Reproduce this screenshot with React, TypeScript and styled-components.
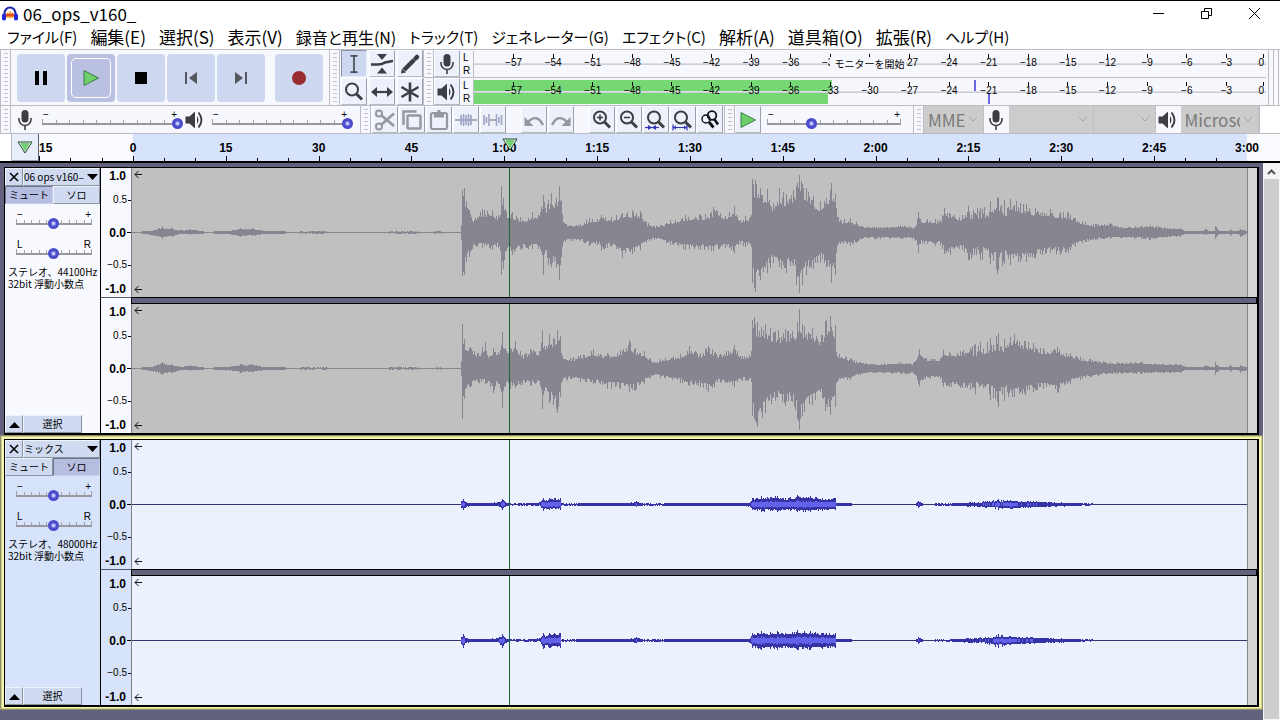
import React from "react";
import styled, { createGlobalStyle, css } from "styled-components";

const GlobalStyle = createGlobalStyle`
  * { box-sizing: border-box; }
  body { margin: 0; background: #62627f; }
  button, input, select { font: inherit; color: inherit; margin: 0; padding: 0; }
  svg { display: block; flex: none; }
`;

const ui = '"Noto Sans CJK JP", "Noto Sans", sans-serif';
const small = '"Liberation Sans", "Noto Sans CJK JP", sans-serif';
const line = "#bcbcc4";
const blue = "#cdd8f0";
const pale = "#f7f8fe";

const Page = styled.div`
  min-height: 100vh;
  display: flex;
  flex-direction: column;
  background: #fff;
  border-top: 1px solid #000;
  font-family: ${small};
  color: #000;
`;

/* ---------- title and menu ---------- */

const TitleBar = styled.header`
  display: flex;
  align-items: center;
  height: 25px;
  padding: 0 2px;
  gap: 5px;
  font: 17px/24px ${ui};
`;
const Title = styled.h1`
  flex: 1;
  margin: 0;
  font: inherit;
`;
const WindowButtons = styled.div`
  display: flex;
`;
const WindowButton = styled.button`
  width: 48px;
  height: 24px;
  border: 0;
  background: none;
  display: grid;
  place-items: center;
`;
const MenuBar = styled.nav`
  display: flex;
  align-items: center;
  gap: 13px;
  height: 23px;
  padding: 0 0 2px 7px;
`;
const MenuItem = styled.button<{ $size: number }>`
  border: 0;
  background: none;
  white-space: nowrap;
  font: ${(p) => p.$size}px/20px ${ui};
  font-feature-settings: "palt";
`;

/* ---------- toolbars ---------- */

const Dock = styled.div`
  display: flex;
  background: ${pale};
  border-top: 1px solid ${line};
`;
const Bar = styled.div<{ $grow?: boolean; $gap?: number; $end?: number }>`
  display: flex;
  align-items: center;
  gap: ${(p) => p.$gap ?? 0}px;
  padding-right: ${(p) => p.$end ?? 0}px;
  flex: ${(p) => (p.$grow ? "1 1 0" : "none")};
  min-width: 0;
`;
const Grip = styled.span`
  flex: none;
  align-self: stretch;
  width: 11px;
  border-right: 1px solid ${line};
  border-left: 1px solid ${line};
  background: repeating-linear-gradient(#c2c2cc 0 1px, transparent 1px 4px) 3px 3px / 4px calc(100% - 6px) no-repeat;
`;
const Transport = styled.div`
  display: flex;
  gap: 2px;
  height: 54px;
  padding: 3px 6px;
`;
const TransportButton = styled.button<{ $active?: boolean; $apart?: boolean }>`
  position: relative;
  width: 48px;
  height: 48px;
  margin-left: ${(p) => (p.$apart ? 8 : 0)}px;
  border: 0;
  border-radius: 4px;
  display: grid;
  place-items: center;
  background: ${(p) => (p.$active ? "#b9c0e1" : blue)};
  ${(p) =>
    p.$active &&
    css`
      &::after {
        content: "";
        position: absolute;
        inset: 4px;
        border: 1px solid #fff;
        border-radius: 5px;
      }
    `}
`;
const ToolGrid = styled.div`
  display: grid;
  grid-template-columns: repeat(3, 26px);
  gap: 1px 2px;
`;
const ToolButton = styled.button<{ $down?: boolean; $apart?: boolean }>`
  flex: none;
  width: 26px;
  height: 27px;
  margin-left: ${(p) => (p.$apart ? 14 : 0)}px;
  border: 1px solid;
  border-color: ${(p) => (p.$down ? "#8b93a9 #e8ecf8 #e8ecf8 #8b93a9" : "#fff #9aa0ac #b4b8c2 #fff")};
  background: ${(p) => (p.$down ? blue : "#ecf1fb")};
  display: grid;
  place-items: center;
`;
const Strip = styled.div`
  display: flex;
  gap: 1px;
`;

/* ---------- level meters ---------- */

const Meters = styled.div`
  flex: 1;
  min-width: 0;
  display: flex;
  flex-direction: column;
`;
const MeterRow = styled.div`
  display: flex;
  height: 28px;
  align-items: center;
  border-bottom: 1px solid ${line};
  &:last-child { border-bottom: 0; height: 27px; }
`;
const MeterSides = styled.div`
  width: 13px;
  padding-left: 3px;
  font-size: 10px;
  line-height: 13px;
`;
const Meter = styled.div`
  position: relative;
  flex: 1;
  height: 26px;
  padding: 1px 0;
  display: flex;
  flex-direction: column;
  gap: 2px;
  border-left: 1px solid ${line};
`;
const MeterMid = styled.i`
  position: absolute;
  left: 0;
  right: 0;
  top: 12px;
  height: 2px;
  background: linear-gradient(#e4e4ec, #c6c6ce);
`;
const Level = styled.div<{ $level: number; $peak: number }>`
  flex: 1;
  background: ${(p) => (p.$level ? `
    linear-gradient(#76d874, #76d874) 0 0 / ${p.$level}% 100% no-repeat,
    linear-gradient(#6a68e2, #6a68e2) ${p.$peak}% 0 / 2px 100% no-repeat` : "transparent")};
`;
const Scale = styled.div`
  position: absolute;
  inset: 0;
  display: grid;
  grid-template-columns: repeat(20, 1fr);
`;
const ScaleCell = styled.span`
  justify-self: end;
  width: 0;
  display: flex;
  flex-direction: column;
  align-items: center;
  padding-top: 3px;
  font-size: 10px;
  line-height: 12px;
  white-space: nowrap;
  &::before {
    content: "";
    flex: none;
    width: 1px;
    height: 4px;
    margin-bottom: -1px;
    background: #000;
  }
  &:last-child {
    align-items: flex-end;
    padding-right: 2px;
  }
`;
const MeterHint = styled.span`
  position: absolute;
  left: 45%;
  top: 6px;
  width: 76px;
  padding-left: 4px;
  background: ${pale};
  font: 10px/14px ${ui};
  white-space: nowrap;
`;
const MeterEnd = styled.div`
  width: 12px;
  border-left: 1px solid ${line};
  margin-left: 2px;
  display: flex;
  &::after {
    content: "";
    width: 4px;
    margin-left: 4px;
    border-left: 1px solid ${line};
    border-right: 1px solid ${line};
  }
`;

/* ---------- slider ---------- */

const SliderBox = styled.label<{ $width: number }>`
  display: block;
  flex: none;
  width: ${(p) => p.$width}px;
`;
const SliderEnds = styled.span`
  display: flex;
  justify-content: space-between;
  padding: 0 1px;
  font: 10px/9px ${small};
`;
const Ticks = styled.span`
  display: flex;
  height: 4px;
  border-right: 1px solid #a4a4ac;
`;
const Tick = styled.i`
  flex: 1;
  border-left: 1px solid #a4a4ac;
  margin-top: 1px;
  &:first-child { margin-top: 0; }
`;
const Range = styled.input`
  appearance: none;
  display: block;
  width: calc(100% + 10px);
  height: 11px;
  margin: -5px -5px 0;
  background: linear-gradient(#98989e, #98989e) center / calc(100% - 10px) 2px no-repeat;
  &::-webkit-slider-thumb {
    appearance: none;
    width: 11px;
    height: 11px;
    border-radius: 50%;
    background: radial-gradient(circle, #c8ccf6 0 1px, #8488e4 2px, #4a4ccc 3px);
  }
`;

/* ---------- device toolbar ---------- */

const SelectBox = styled.div<{ $grow: number }>`
  position: relative;
  flex: ${(p) => p.$grow} 1 0;
  min-width: 0;
  border-right: 1px solid #c0c0c0;
  svg {
    position: absolute;
    right: 5px;
    top: 10px;
    pointer-events: none;
  }
`;
const Select = styled.select`
  appearance: none;
  display: block;
  width: 100%;
  height: 27px;
  padding: 0 18px 0 4px;
  border: 0;
  border-radius: 0;
  background: #cccccc;
  color: #7a7a7a;
  opacity: 1;
  font: 17px/27px ${ui};
`;
const IconSlot = styled.span`
  flex: none;
  width: 25px;
  display: grid;
  place-items: center;
`;
const DockTail = styled.div`
  width: 21px;
  border-left: 1px solid ${line};
  background: #fff;
`;

/* ---------- time ruler ---------- */

const TimeRuler = styled.div`
  display: flex;
  height: 30px;
  background: #fafbff;
  border-top: 1px solid ${line};
  border-bottom: 2px solid #000;
  overflow: hidden;
`;
const RulerLead = styled.div`
  flex: none;
  width: 12px;
  border-right: 1px solid ${line};
  background: #fff;
`;
const PinButton = styled.button`
  flex: none;
  width: 27px;
  border: 0;
  border-right: 1px solid #5a6178;
  border-bottom: 1px solid #9a9fae;
  background: #e9effa;
  display: grid;
  place-items: center;
`;
const RulerSpan = styled.div<{ $width?: number; $shade?: boolean }>`
  position: relative;
  display: flex;
  flex: ${(p) => (p.$width ? `none` : "1")};
  width: ${(p) => (p.$width ? `${p.$width}px` : "auto")};
  background: ${(p) => (p.$shade ? "#d6e3fb" : "transparent")};
`;
const RulerCell = styled.div`
  flex: 1;
  display: flex;
  flex-direction: column;
  justify-content: space-between;
`;
const RulerLabel = styled.span<{ $flush?: boolean }>`
  width: 0;
  display: flex;
  justify-content: ${(p) => (p.$flush ? "flex-start" : "center")};
  padding-top: 6px;
  font: bold 12px/16px ${small};
  white-space: nowrap;
`;
const RulerTicks = styled.span`
  display: flex;
  align-items: flex-end;
`;
const RulerTick = styled.i`
  flex: 1;
  height: 3px;
  border-left: 1px solid #000;
  &:first-child { height: 5px; }
`;
const PlayHead = styled.span`
  position: absolute;
  left: 33.8%;
  top: 4px;
  width: 0;
  display: flex;
  justify-content: center;
`;

/* ---------- tracks ---------- */

const Workspace = styled.main`
  flex: 1;
  display: flex;
  background: #62627f;
`;
const TrackList = styled.div`
  flex: 1;
  min-width: 0;
`;
const TrackFrame = styled.section<{ $selected: boolean }>`
  padding: ${(p) => (p.$selected ? "4px 4px 3px" : "4px 4px 0")};
  ${(p) =>
    p.$selected &&
    css`
      background: #f6f6b4;
      box-shadow: inset 0 0 0 1px #8e8e72, inset 0 0 0 2px #cfcf7c;
    `}
`;
const TrackBox = styled.div`
  display: flex;
  border: solid #000;
  border-width: 1px 2px 2px 1px;
`;
const Panel = styled.div<{ $selected: boolean }>`
  flex: none;
  width: 96px;
  display: flex;
  flex-direction: column;
  border-right: 1px solid #000;
  background: ${(p) => (p.$selected ? "#d6e3fb" : "#f8f9ff")};
  font: 10px/12px ${ui};
`;
const PanelRow = styled.div`
  display: flex;
  height: 18px;
`;
const PanelButton = styled.button<{ $width?: number; $down?: boolean; $title?: boolean }>`
  flex: ${(p) => (p.$width ? "none" : "1")};
  width: ${(p) => (p.$width ? `${p.$width}px` : "auto")};
  min-width: 0;
  display: flex;
  align-items: center;
  justify-content: ${(p) => (p.$title ? "space-between" : "center")};
  overflow: hidden;
  white-space: nowrap;
  border: 1px solid;
  border-color: ${(p) => (p.$down ? "#70768c #c8cee4 #c8cee4 #70768c" : "#eef2fc #8e93a2 #8e93a2 #eef2fc")};
  background: ${(p) => (p.$down ? "#b6bde0" : "#d0dbf2")};
`;
const PanelSliders = styled.div`
  display: flex;
  flex-direction: column;
  gap: 11px;
  padding: 6px 0 0 11px;
`;
const PanelInfo = styled.p`
  margin: 7px 0 auto;
  padding-left: 3px;
  white-space: nowrap;
`;
const Channels = styled.div`
  flex: 1;
  min-width: 0;
  display: flex;
  flex-direction: column;
`;
const Channel = styled.div`
  display: flex;
  height: 129px;
`;
const ChannelGap = styled.div<{ $selected: boolean }>`
  height: 7px;
  padding-left: 30px;
  background: ${(p) => `linear-gradient(#55586a, #55586a) 0 0 / 100% 1px no-repeat ${p.$selected ? "#d6e3fb" : "#f8f9ff"}`};
`;
const GapBar = styled.div`
  height: 7px;
  background: #62627f;
  border: 1px solid #000;
`;
const AmpRuler = styled.div<{ $selected: boolean }>`
  flex: none;
  width: 31px;
  display: grid;
  grid-template-rows: 16px 32px 33px 32px 16px;
  border-right: 1px solid #808088;
  background: ${(p) => (p.$selected ? "#d6e3fb" : "#f8f9ff")};
`;
const Amp = styled.span<{ $strong?: boolean; $tick?: number }>`
  display: flex;
  align-items: center;
  justify-content: flex-end;
  gap: 1px;
  font-weight: ${(p) => (p.$strong ? "bold" : "normal")};
  font-size: ${(p) => (p.$strong ? 12 : 10)}px;
  line-height: 16px;
  &::after {
    content: "";
    width: ${(p) => (p.$tick ? p.$tick : 4)}px;
    height: 1px;
    background: ${(p) => (p.$tick ? "#000" : "transparent")};
  }
`;
const Clip = styled.div<{ $selected: boolean }>`
  position: relative;
  flex: 1;
  min-width: 0;
  background: ${(p) => (p.$selected ? "#ebf1fd" : "#c0c0c0")};
  border-right: 1px solid #858585;
`;
const AfterClip = styled.div`
  width: 9px;
  background: #d6d6d8;
`;
const ArrowSvg = styled.svg<{ $bottom?: boolean }>`
  position: absolute;
  left: 2px;
  ${(p) => (p.$bottom ? "bottom: 3px;" : "top: 2px;")}
`;
const ScrollBar = styled.div`
  flex: none;
  width: 17px;
  padding: 1px;
  background: #f4f4f4;
  display: flex;
  flex-direction: column;
`;
const ScrollUp = styled.button`
  height: 15px;
  border: 0;
  background: none;
  display: grid;
  place-items: center;
`;
const ScrollThumb = styled.div`
  flex: 1;
  background: #cdcdcd;
`;

/* ---------- waveform data: [x, up, down] peaks in pixels ---------- */

type Peak = [number, number, number];
const quietIntro: Peak[] = [
  [0, 0, 0], [9, 0, 0], [10, 1, 1], [18, 1, 2], [26, 4, 4], [30, 6, 6], [34, 4, 4], [40, 4, 4], [45, 2, 2], [53, 2, 1],
  [58, 3, 2], [64, 2, 1], [71, 1, 1], [72, 0, 0], [81, 0, 0], [82, 1, 1], [100, 2, 2], [108, 4, 4], [113, 3, 3], [120, 4, 3],
  [128, 2, 2], [133, 1, 1], [153, 1, 1], [154, 0, 0], [167, 0, 0], [168, 0.8, 0.8], [194, 0.6, 0.6], [195, 0, 0],
  [256, 0, 0], [257, 0.6, 0.6], [285, 0.5, 0.5], [286, 0, 0], [301, 0, 0], [302, 0.8, 0.8], [309, 0.8, 0.8], [310, 0, 0], [328, 0, 0],
];
const outro: Peak[] = [
  [1048, 4, 4], [1053, 1, 1], [1068, 1, 1], [1074, 3, 2], [1078, 1, 1], [1082, 1, 1], [1083, 6, 6], [1086, 2, 2], [1088, 1, 1],
  [1096, 1, 1], [1098, 3, 3], [1101, 1, 1], [1106, 1, 1], [1108, 3, 4], [1112, 2, 2], [1115, 1, 1],
];
const left: Peak[] = [
  ...quietIntro,
  [329, 7, 7], [330, 42, 43], [332, 44, 42], [334, 31, 29], [337, 22, 24], [339, 15, 17], [345, 15, 14], [350, 23, 15], [360, 22, 17],
  [366, 17, 15], [368, 17, 18], [369, 46, 42], [371, 34, 36], [374, 20, 18], [380, 20, 22], [388, 15, 17], [396, 14, 16], [400, 20, 16],
  [408, 20, 16], [411, 37, 42], [413, 24, 18], [416, 32, 32], [419, 39, 34], [424, 34, 35], [427, 46, 47], [429, 32, 24], [430, 18, 14],
  [433, 8, 9], [448, 8, 8], [457, 14, 13], [468, 14, 12], [469, 17, 18], [479, 15, 14], [490, 19, 25], [500, 22, 21], [508, 21, 17],
  [514, 10, 10], [524, 6, 6], [538, 12, 12], [553, 17, 17], [568, 18, 17], [579, 20, 18], [581, 25, 18], [593, 16, 15], [602, 26, 20],
  [608, 12, 11], [613, 16, 14], [619, 17, 14], [620, 53, 50], [623, 52, 59], [628, 44, 47], [635, 43, 40], [641, 29, 30], [647, 44, 34],
  [654, 38, 40], [661, 42, 33], [664, 46, 52], [667, 57, 60], [670, 48, 52], [674, 44, 42], [681, 36, 36], [688, 31, 30], [694, 34, 34],
  [699, 49, 50], [703, 38, 42], [704, 24, 20], [708, 12, 11], [718, 14, 13], [724, 10, 10], [730, 6, 6], [748, 5, 6], [768, 7, 6],
  [782, 5, 6], [785, 13, 12], [786, 20, 20], [788, 13, 11], [803, 13, 13], [808, 12, 12], [812, 24, 21], [818, 18, 22], [830, 17, 17],
  [836, 26, 27], [848, 24, 27], [858, 31, 31], [865, 35, 41], [872, 32, 31], [878, 33, 32], [888, 29, 29], [894, 28, 29], [903, 24, 25],
  [918, 23, 20], [928, 20, 22], [936, 20, 20], [943, 14, 14], [953, 10, 9], [963, 8, 7], [978, 9, 6], [988, 5, 5], [1018, 7, 7], [1038, 4, 4],
  ...outro,
];
const right: Peak[] = [
  ...quietIntro,
  [329, 7, 7], [330, 44, 50], [332, 29, 30], [338, 21, 18], [346, 15, 14], [353, 26, 15], [355, 13, 14], [361, 20, 24], [366, 16, 15],
  [370, 36, 39], [373, 20, 17], [378, 20, 20], [383, 27, 19], [390, 13, 16], [398, 19, 17], [408, 17, 17], [410, 38, 40], [412, 22, 22],
  [417, 34, 34], [421, 30, 36], [425, 38, 44], [428, 32, 28], [429, 15, 14], [438, 10, 10], [448, 13, 13], [461, 19, 15], [468, 14, 15],
  [475, 15, 20], [488, 18, 20], [497, 28, 23], [503, 20, 22], [512, 17, 15], [518, 9, 9], [522, 6, 6], [528, 9, 9], [548, 14, 14],
  [557, 22, 17], [568, 15, 18], [576, 22, 23], [588, 14, 14], [602, 23, 18], [610, 12, 12], [619, 17, 13], [620, 48, 47], [622, 51, 50],
  [625, 46, 58], [633, 44, 44], [643, 37, 32], [653, 39, 37], [660, 37, 33], [665, 46, 50], [667, 59, 61], [670, 44, 47], [680, 40, 36],
  [690, 33, 29], [693, 47, 42], [698, 52, 46], [703, 43, 38], [704, 16, 14], [718, 10, 11], [728, 6, 6], [743, 4, 4], [768, 6, 5],
  [781, 5, 5], [787, 19, 17], [793, 10, 10], [808, 10, 10], [811, 18, 18], [828, 17, 19], [843, 24, 25], [858, 30, 31], [866, 35, 38],
  [872, 29, 32], [882, 34, 28], [893, 27, 26], [901, 25, 23], [911, 20, 20], [925, 21, 24], [938, 15, 15], [948, 11, 11], [958, 9, 8],
  [978, 6, 5], [1008, 6, 5], [1038, 4, 4],
  ...outro,
];
const mix: Peak[] = [
  [0, 0, 0], [328, 0, 0], [329, 3, 3], [331, 5, 5], [334, 2, 2], [340, 1, 1], [366, 2, 1], [370, 5, 5], [373, 2, 2], [376, 1, 1],
  [393, 0.8, 0.8], [408, 2, 1], [411, 6, 6], [414, 4, 4], [417, 6, 5], [428, 6, 5], [429, 0.9, 0.9], [445, 0.9, 0.9], [446, 1, 1],
  [496, 1, 1], [504, 3, 2], [509, 1, 1], [522, 0.6, 0.6], [532, 1, 1], [610, 1, 1],
  [618, 2, 2], [620, 6, 5], [629, 8, 7], [638, 7, 6], [645, 8, 7], [653, 6, 5], [665, 9, 7], [678, 8, 7], [690, 6, 6], [703, 6, 5],
  [704, 1, 1], [719, 1, 1], [720, 0, 0], [783, 0, 0], [786, 3, 3], [790, 1, 1], [791, 0, 0], [802, 0, 0], [803, 0.9, 0.9], [820, 1, 1],
  [838, 2, 2], [853, 3, 3], [866, 5, 5], [878, 4, 4], [898, 3, 3], [918, 2, 2], [948, 1, 1], [960, 0.7, 0.7], [961, 0, 0], [1115, 0, 0],
];
const mixRight = mix.map(([x, u, d]): Peak => [x, u > 4 ? u + 1 : u, d > 4 ? d + 2 : d]);

const random = (seed: number) => {
  let s = seed;
  return () => {
    s = (s * 1664525 + 1013904223) >>> 0;
    return s / 4294967296;
  };
};

function wavePaths(peaks: Peak[], seed: number) {
  const next = random(seed);
  let outer = "";
  let inner = "";
  let k = 0;
  for (let x = 0; x < 1115; x++) {
    while (k < peaks.length - 2 && peaks[k + 1][0] <= x) k++;
    const [x0, u0, d0] = peaks[k];
    const [x1, u1, d1] = peaks[k + 1];
    const t = (x - x0) / (x1 - x0);
    const exact = x === x0;
    const comb = x > 836 && x < 875 ? 0.5 : 0.66;
    const shape = (v: number) => {
      const r = next();
      if (v < 1) return v > 0.4 ? Math.round(r) : 0;
      return Math.round(exact ? v : v * (comb + (1 - comb) * r * r));
    };
    const up = shape(u0 + (u1 - u0) * t);
    const down = shape(d0 + (d1 - d0) * t);
    if (up || down) outer += `M${x + 0.5} ${64 - up}V${65 + down}`;
    if (up > 2) inner += `M${x + 0.5} ${64 - Math.round(up * 0.4)}V${65 + Math.round(down * 0.4)}`;
  }
  return { outer, inner };
}

/* ---------- icons ---------- */

const ink = "#3d3d44";
const Icon = ({ s = 22, children }: { s?: number; children: React.ReactNode }) => (
  <svg width={s} height={s} viewBox="0 0 22 22" fill="none" stroke={ink} strokeWidth="2">
    {children}
  </svg>
);
const MicIcon = () => (
  <Icon>
    <rect x="7.500" y="1" width="7" height="12.500" rx="3.500" fill={ink} stroke="none" />
    <path d="M5 9v1.500a6 6 0 0 0 12 0V9M11 16.500V21" strokeWidth="1.600" />
  </Icon>
);
const SpeakerIcon = () => (
  <Icon>
    <path d="M1.500 7.500h4L11 2.500v17l-5.500-5h-4z" fill={ink} stroke="none" />
    <path d="M13 7q3 4 0 8z" fill={ink} stroke="none" />
    <path d="M14.500 3.500q6 7.500 0 15" strokeWidth="1.900" />
  </Icon>
);
const Lens = ({ children }: { children?: React.ReactNode }) => (
  <Icon>
    <circle cx="9" cy="8.500" r="6" strokeWidth="2" />
    <path d="M13.500 13l5.500 5.500" strokeWidth="3" />
    {children}
  </Icon>
);
const PlayTriangle = ({ s = 18 }: { s?: number }) => (
  <svg width={s} height={s} viewBox="0 0 18 18">
    <path d="M2 1.500L16.500 9 2 16.500z" fill="#6ccf6a" stroke="#3b7c48" />
  </svg>
);
const PinTriangle = () => (
  <svg width="16" height="13" viewBox="0 0 16 13">
    <path d="M1 1h14L8 12z" fill="#e9f6e9" stroke="#1e4a28" />
    <path d="M4 2.500h8L8 9.500z" fill="#70d56e" stroke="#5cae62" strokeWidth=".6" />
  </svg>
);
const Chevron = () => (
  <svg width="10" height="7" viewBox="0 0 10 7">
    <path d="M1 1l4 4 4-4" fill="none" stroke="#a2a2a2" />
  </svg>
);
const Triangle = ({ up }: { up?: boolean }) => (
  <svg width="13" height="7" viewBox="0 0 13 7">
    <path d={up ? "M1 7h11L6.500 1z" : "M1 0h11L6.500 6z"} />
  </svg>
);
const Arrow = ({ bottom }: { bottom?: boolean }) => (
  <ArrowSvg $bottom={bottom} width="8" height="9" viewBox="0 0 8 9">
    <path d="M8 4.500H1M4.500 1L1 4.500 4.500 8" fill="none" stroke="#111" />
  </ArrowSvg>
);
const AppIcon = () => (
  <svg width="16" height="16" viewBox="0 0 16 16">
    <path d="M4 8l2-2 1 2 1-4 1 4 1-2 2 2v3l-2 1-1-1-1 2-1-2-1 1-2-1z" fill="#f08a1c" />
    <path d="M4 9h8" stroke="#e2381c" strokeWidth="1.500" />
    <path d="M2.500 9V7.500a5.500 6 0 0 1 11 0V9" fill="none" stroke="#1a22a8" strokeWidth="2" />
    <rect x="0" y="7.500" width="4" height="7" rx="1.800" fill="#2228d8" />
    <rect x="12" y="7.500" width="4" height="7" rx="1.800" fill="#2228d8" />
  </svg>
);

const grey = "#96969e";
const editTools: [string, React.ReactNode, boolean?][] = [
  ["切り取り", <Icon><g stroke={grey}><circle cx="5" cy="4.500" r="3" /><circle cx="5" cy="17.500" r="3" /><path d="M7.500 6.500L20 17M7.500 15.500L20 4.500" strokeWidth="2.600" /></g></Icon>],
  ["コピー", <Icon><g stroke={grey} strokeWidth="2.400"><path d="M2.500 16V2.500h13" /><rect x="6.500" y="6.500" width="13" height="13" rx="1" /></g></Icon>],
  ["貼り付け", <Icon><g stroke={grey} strokeWidth="2.200"><rect x="3" y="4" width="16" height="16" rx="2" /><path d="M7 4h8v3.500H7zM9.500 2h3" fill={grey} /></g></Icon>],
  ["トリム", <Icon><path d="M0 11h22" stroke={grey} strokeWidth="1.500" /><path d="M6 6v10M8.500 5v12M11 6v10M13.500 5v12M16 6v10" stroke="#9ea2c4" strokeWidth="1.600" /></Icon>],
  ["無音", <Icon><path d="M8 11h6" stroke={grey} strokeWidth="1.500" /><path d="M2 6v10M4.500 8v6M7 5v12M14.500 5v12M17 8v6M19.500 6v10" stroke="#9ea2c4" strokeWidth="1.600" /></Icon>],
  ["元に戻す", <Icon><path d="M5 13q9-9 15 3" stroke={grey} strokeWidth="2.400" /><path d="M1.500 8v9h9z" fill={grey} stroke="none" /></Icon>, true],
  ["やり直す", <Icon><path d="M2 16q6-12 15-3" stroke={grey} strokeWidth="2.400" /><path d="M20.500 8v9h-9z" fill={grey} stroke="none" /></Icon>],
  ["拡大", <Lens><path d="M6 8.500h6M9 5.500v6" strokeWidth="1.600" /></Lens>, true],
  ["縮小", <Lens><path d="M6 8.500h6" strokeWidth="1.600" /></Lens>],
  ["選択に合わせる", <Lens><path d="M0 18.500h14" stroke="#3434b4" strokeWidth="1.200" /><path d="M3 16v5L7 18.500zM11 16v5L7 18.500z" fill="#3434b4" stroke="none" /></Lens>],
  ["全体に合わせる", <Lens><path d="M1 18.500h14M1 15.500v6M15 15.500v6" stroke="#3434b4" strokeWidth="1.200" /><path d="M1 18.500l3-2v4zM15 18.500l-3-2v4z" fill="#3434b4" stroke="none" /></Lens>],
  ["ズーム切り替え", <Icon><g stroke="#111"><circle cx="13" cy="6.500" r="4.300" strokeWidth="1.800" /><circle cx="7" cy="10" r="4" strokeWidth="1.400" /><path d="M15.500 10.500l3.500 5" strokeWidth="2.600" /><path d="M10 13l4.500 5.500" strokeWidth="2.800" /></g></Icon>],
];

const pointerTools: [string, React.ReactNode][] = [
  ["選択ツール", <Icon><path d="M7.500 2.800H11h3.500M11 2.800v16.400M7.500 19.200h7" stroke="#4a4d58" strokeWidth="1.700" /></Icon>],
  ["エンベロープ", <Icon><path d="M0 11.500h7q4 0 7-2l8-1.500" strokeWidth="2.600" /><path d="M6 1h10l-5 6zM6 20.500h10l-5-6z" fill={ink} stroke="none" /></Icon>],
  ["描画ツール", <Icon><path d="M5 17L15 7" strokeWidth="4.500" /><path d="M16.500 5.500l1.500-1.500" strokeWidth="4.500" strokeLinecap="round" /><path d="M2 20.500l1-5 4 4z" fill={ink} stroke="none" /></Icon>],
  ["ズームツール", <Lens />],
  ["タイムシフト", <Icon><path d="M4 11h14" strokeWidth="2.200" /><path d="M0 11l6-5v10zM22 11l-6-5v10z" fill={ink} stroke="none" /></Icon>],
  ["マルチツール", <Icon><path d="M11 1.500v19M2.500 6l17 10M19.500 6l-17 10" strokeWidth="2.600" /></Icon>],
];

/* ---------- parts ---------- */

function Slider({ label, width, value, ends = ["−", "+"] }: { label: string; width: number; value: number; ends?: string[] }) {
  return (
    <SliderBox $width={width}>
      <SliderEnds><span>{ends[0]}</span><span>{ends[1]}</span></SliderEnds>
      <Ticks>{Array.from({ length: 10 }, (_, i) => <Tick key={i} />)}</Ticks>
      <Range type="range" aria-label={label} defaultValue={value} />
    </SliderBox>
  );
}

const dbMarks = Array.from({ length: 20 }, (_, i) => 57 - i * 3);

function LevelMeter({ label, icon, levels, peaks, hint }: { label: string; icon: React.ReactNode; levels: number[]; peaks: number[]; hint?: string }) {
  /* the hint sits over the -30 mark, so that mark keeps only its tick */
  const text = (m: number) => (hint && m === 30 ? "" : m ? `−${m}` : "0");
  return (
    <MeterRow>
      <Grip />
      <ToolButton aria-label={label}>{icon}</ToolButton>
      <MeterSides>L<br />R</MeterSides>
      <Meter>
        <Level $level={levels[0]} $peak={peaks[0]} />
        <Level $level={levels[1]} $peak={peaks[1]} />
        <MeterMid />
        <Scale>{dbMarks.map((m) => <ScaleCell key={m}>{text(m)}</ScaleCell>)}</Scale>
        {hint && <MeterHint>{hint}</MeterHint>}
      </Meter>
    </MeterRow>
  );
}

function Device({ label, value, grow }: { label: string; value: string; grow: number }) {
  return (
    <SelectBox $grow={grow}>
      <Select aria-label={label} disabled><option>{value}</option></Select>
      <Chevron />
    </SelectBox>
  );
}

function Wave({ peaks, seed, selected }: { peaks: Peak[]; seed: number; selected: boolean }) {
  const { outer, inner } = wavePaths(peaks, seed);
  return (
    <Channel>
      <AmpRuler $selected={selected}>
        <Amp $strong>1.0</Amp>
        <Amp $tick={3}>0.5</Amp>
        <Amp $strong $tick={4}>0.0</Amp>
        <Amp $tick={3}>−0.5</Amp>
        <Amp $strong>-1.0</Amp>
      </AmpRuler>
      <Clip $selected={selected}>
        <svg width="100%" height="129" viewBox="0 0 1115 129" preserveAspectRatio="none" shapeRendering="crispEdges">
          <path d="M0 64.500H1115" stroke={selected ? "#34346e" : "#868690"} />
          <path d={outer} stroke={selected ? "#3634a4" : "#868690"} />
          {selected && <path d={inner} stroke="#6462ea" />}
          <path d="M377 0h1v129h-1z" fill="#1f6636" />
        </svg>
        <Arrow />
        <Arrow bottom />
      </Clip>
      <AfterClip />
    </Channel>
  );
}

interface TrackProps {
  name: string;
  rate: string;
  selected: boolean;
  muted: boolean;
  solo: boolean;
  channels: [Peak[], number][];
}

function Track({ name, rate, selected, muted, solo, channels }: TrackProps) {
  return (
    <TrackFrame $selected={selected}>
      <TrackBox>
        <Panel $selected={selected}>
          <PanelRow>
            <PanelButton $width={18} aria-label="閉じる">
              <svg width="10" height="10" viewBox="0 0 10 10"><path d="M1 1l8 8M9 1L1 9" stroke="#000" strokeWidth="1.500" /></svg>
            </PanelButton>
            <PanelButton $title>{name}<Triangle /></PanelButton>
          </PanelRow>
          <PanelRow>
            <PanelButton $width={48} $down={muted}>ミュート</PanelButton>
            <PanelButton $down={solo}>ソロ</PanelButton>
          </PanelRow>
          <PanelSliders>
            <Slider label="ゲイン" width={76} value={49} />
            <Slider label="パン" width={76} value={49} ends={["L", "R"]} />
          </PanelSliders>
          <PanelInfo>ステレオ、{rate}<br />32bit 浮動小数点</PanelInfo>
          <PanelRow>
            <PanelButton $width={18} aria-label="折りたたむ"><Triangle up /></PanelButton>
            <PanelButton $width={59}>選択</PanelButton>
          </PanelRow>
        </Panel>
        <Channels>
          <Wave peaks={channels[0][0]} seed={channels[0][1]} selected={selected} />
          <ChannelGap $selected={selected}><GapBar /></ChannelGap>
          <Wave peaks={channels[1][0]} seed={channels[1][1]} selected={selected} />
        </Channels>
      </TrackBox>
    </TrackFrame>
  );
}

/* katakana words are set smaller so that they stay compact beside the kanji ones */
const menus: [string, number][] = [
  ["ファイル(F)", 15], ["編集(E)", 17], ["選択(S)", 17], ["表示(V)", 17], ["録音と再生(N)", 16], ["トラック(T)", 15],
  ["ジェネレーター(G)", 15], ["エフェクト(C)", 15], ["解析(A)", 17], ["道具箱(O)", 17], ["拡張(R)", 17], ["ヘルプ(H)", 15],
];
const times = ["0", "15", "30", "45", "1:00", "1:15", "1:30", "1:45", "2:00", "2:15", "2:30", "2:45"];

const TimeCell = ({ label, flush }: { label: string; flush?: boolean }) => (
  <RulerCell>
    <RulerLabel $flush={flush}>{label}</RulerLabel>
    <RulerTicks><RulerTick /><RulerTick /><RulerTick /></RulerTicks>
  </RulerCell>
);

export default function App() {
  return (
    <Page>
      <GlobalStyle />
      <TitleBar>
        <AppIcon />
        <Title>06_ops_v160_</Title>
        <WindowButtons>
          <WindowButton aria-label="最小化"><svg width="11" height="11"><path d="M0 5.500h11" stroke="#000" /></svg></WindowButton>
          <WindowButton aria-label="元のサイズ"><svg width="11" height="11" fill="none" stroke="#000"><path d="M.5 3.500h7v7h-7zM3.500 3.500v-3h7v7h-3" /></svg></WindowButton>
          <WindowButton aria-label="閉じる"><svg width="11" height="11"><path d="M0 0l11 11M11 0L0 11" stroke="#000" /></svg></WindowButton>
        </WindowButtons>
      </TitleBar>
      <MenuBar>{menus.map(([text, size]) => <MenuItem key={text} $size={size}>{text}</MenuItem>)}</MenuBar>

      <Dock>
        <Bar>
          <Grip />
          <Transport>
            <TransportButton aria-label="一時停止"><svg width="14" height="14"><path d="M1 0h4v14H1zM9 0h4v14H9z" /></svg></TransportButton>
            <TransportButton aria-label="再生" $active><PlayTriangle /></TransportButton>
            <TransportButton aria-label="停止"><svg width="12" height="12"><path d="M0 0h12v12H0z" /></svg></TransportButton>
            <TransportButton aria-label="先頭へ"><svg width="14" height="12" fill="#55565e"><path d="M1 0h2v12H1zM13 0v12L5 6z" /></svg></TransportButton>
            <TransportButton aria-label="末尾へ"><svg width="14" height="12" fill="#55565e"><path d="M11 0h2v12h-2zM1 0v12l8-6z" /></svg></TransportButton>
            <TransportButton aria-label="録音" $apart><svg width="14" height="14"><circle cx="7" cy="7" r="7" fill="#982c2e" /></svg></TransportButton>
          </Transport>
        </Bar>
        <Bar $gap={1}>
          <Grip />
          <ToolGrid>
            {pointerTools.map(([label, icon], i) => <ToolButton key={label} aria-label={label} $down={i === 0}>{icon}</ToolButton>)}
          </ToolGrid>
        </Bar>
        <Bar $grow>
          <Meters>
            <LevelMeter label="録音レベル" icon={<MicIcon />} levels={[0, 0]} peaks={[0, 0]} hint="モニターを開始" />
            <LevelMeter label="再生レベル" icon={<SpeakerIcon />} levels={[45.2, 44.7]} peaks={[63.3, 65]} />
          </Meters>
        </Bar>
        <MeterEnd />
      </Dock>

      <Dock>
        <Bar $gap={3} $end={12}>
          <Grip />
          <Bar $gap={6}>
            <MicIcon />
            <Slider label="録音音量" width={136} value={100} />
            <SpeakerIcon />
            <Slider label="再生音量" width={136} value={100} />
          </Bar>
        </Bar>
        <Bar $gap={1} $end={1}>
          <Grip />
          <Strip>
            {editTools.map(([label, icon, apart]) => <ToolButton key={label} aria-label={label} $apart={apart}>{icon}</ToolButton>)}
          </Strip>
        </Bar>
        <Bar $end={12}>
          <Grip />
          <Bar $gap={6}>
            <ToolButton aria-label="指定速度で再生"><PlayTriangle /></ToolButton>
            <Slider label="再生速度" width={134} value={33} />
          </Bar>
        </Bar>
        <Bar $grow>
          <Grip />
          <Device label="ホスト" value="MME" grow={59} />
          <IconSlot><MicIcon /></IconSlot>
          <Device label="録音デバイス" value="" grow={85} />
          <Device label="録音チャンネル" value="" grow={61} />
          <IconSlot><SpeakerIcon /></IconSlot>
          <Device label="再生デバイス" value="Microsoft" grow={78} />
        </Bar>
        <DockTail />
      </Dock>

      <TimeRuler>
        <RulerLead />
        <PinButton aria-label="再生ヘッドを固定"><PinTriangle /></PinButton>
        <RulerSpan $width={94}><TimeCell label="15" flush /></RulerSpan>
        <RulerSpan $shade>
          {times.map((t) => <TimeCell key={t} label={t} />)}
          <PlayHead><PinTriangle /></PlayHead>
        </RulerSpan>
        <RulerSpan $width={33}>
          <RulerLabel>3:00</RulerLabel>
        </RulerSpan>
      </TimeRuler>

      <Workspace>
        <TrackList>
          <Track name="06 ops v160–" rate="44100Hz" selected={false} muted solo={false} channels={[[left, 11], [right, 29]]} />
          <Track name="ミックス" rate="48000Hz" selected muted={false} solo channels={[[mix, 5], [mixRight, 83]]} />
        </TrackList>
        <ScrollBar>
          <ScrollUp aria-label="上へスクロール"><svg width="9" height="6"><path d="M1 5l3.500-3.500L8 5" fill="none" stroke="#555" strokeWidth="2" /></svg></ScrollUp>
          <ScrollThumb />
        </ScrollBar>
      </Workspace>
    </Page>
  );
}
